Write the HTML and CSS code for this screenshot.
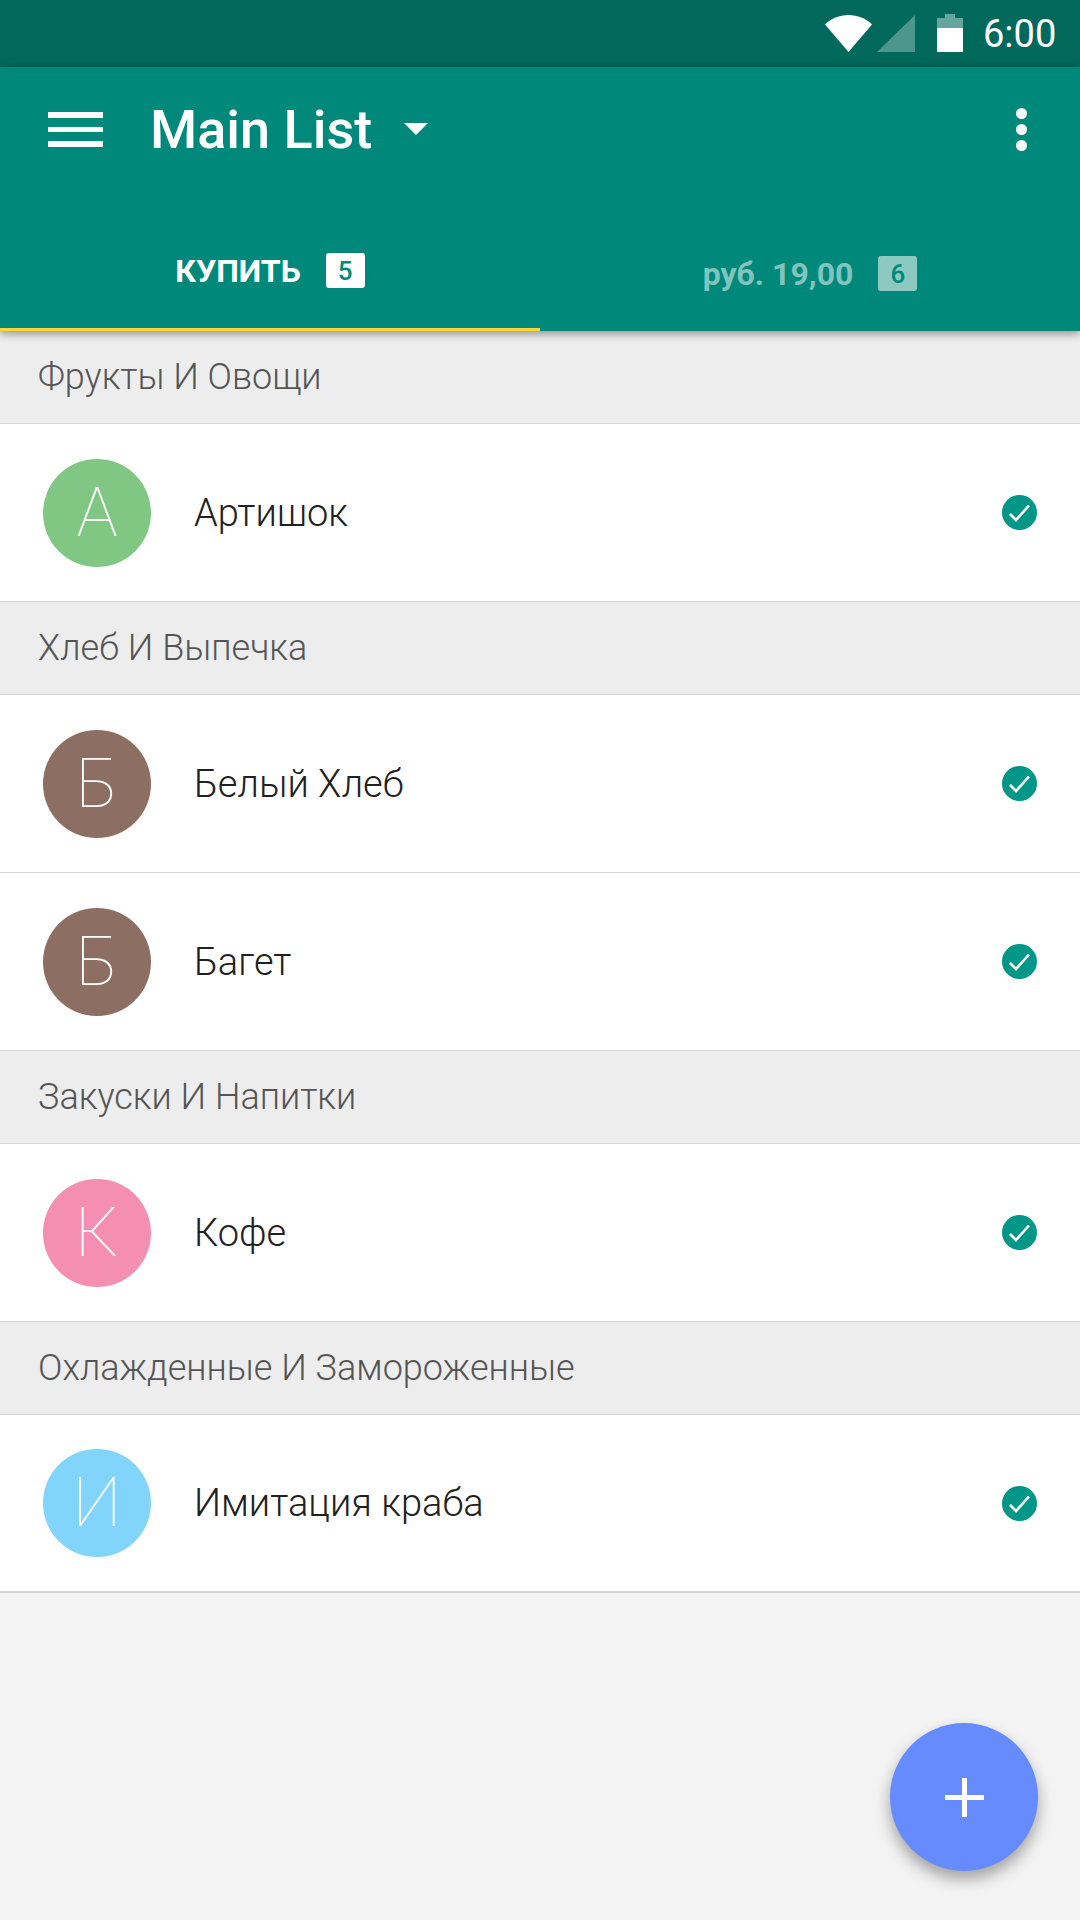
FILE: index.html
```html
<!doctype html>
<html>
<head>
<meta charset="utf-8">
<title>Main List</title>
<meta content="width=1080" name="viewport">
<link rel="stylesheet" href="styles.css">
</head>
<body>

<div class="statusbar">
	<svg class="st-wifi" width="47" height="37" viewBox="0 0 47 37"><path d="M0 9.5C6 3.5 14.5 0 23.5 0S41 3.5 47 9.5L23.5 37z" fill="#fff"/></svg>
	<svg class="st-signal" width="38" height="37" viewBox="0 0 38 37"><path d="M0 37L38 0V37z" fill="#fff" fill-opacity=".3"/></svg>
	<svg class="st-batt" width="26" height="38" viewBox="0 0 26 38"><path d="M8 0H18V4H26V14H0V4H8z" fill="#fff" fill-opacity=".4"/><rect y="14" width="26" height="24" fill="#fff"/></svg>
	<span class="st-time">6:00</span>
</div>

<div class="header">
	<div class="toolbar">
		<svg class="menu" width="55" height="35" viewBox="0 0 55 35"><path d="M0 0H55V6H0zM0 15H55V20H0zM0 29H55V35H0z" fill="#fff"/></svg>
		<span class="title">Main List</span>
		<svg class="arrow" width="24" height="12" viewBox="0 0 24 12"><path d="M0 0H24L12 12z" fill="#fff"/></svg>
		<svg class="more" width="11" height="43" viewBox="0 0 11 43"><circle cx="5.5" cy="5.5" r="5.5" fill="#fff"/><circle cx="5.5" cy="21.5" r="5.5" fill="#fff"/><circle cx="5.5" cy="37.5" r="5.5" fill="#fff"/></svg>
	</div>
	<div class="tabs">
		<div class="tab active"><span class="tab-label">КУПИТЬ</span><span class="badge">5</span></div>
		<div class="tab"><span class="tab-label">руб. 19,00</span><span class="badge">6</span></div>
	</div>
</div>

<div class="list">
	<div class="section">Фрукты И Овощи</div>
	<div class="row">
		<span class="avatar green">А</span>
		<span class="name">Артишок</span>
		<svg class="check" width="35" height="35" viewBox="0 0 35 35"><circle cx="17.5" cy="17.5" r="17.5" fill="#009688"/><path d="M8 19L14 25L27 10.500" fill="none" stroke="#fff" stroke-width="2.600"/></svg>
	</div>
	<div class="section">Хлеб И Выпечка</div>
	<div class="row">
		<span class="avatar brown">Б</span>
		<span class="name">Белый Хлеб</span>
		<svg class="check" width="35" height="35" viewBox="0 0 35 35"><circle cx="17.5" cy="17.5" r="17.5" fill="#009688"/><path d="M8 19L14 25L27 10.500" fill="none" stroke="#fff" stroke-width="2.600"/></svg>
	</div>
	<div class="row">
		<span class="avatar brown">Б</span>
		<span class="name">Багет</span>
		<svg class="check" width="35" height="35" viewBox="0 0 35 35"><circle cx="17.5" cy="17.5" r="17.5" fill="#009688"/><path d="M8 19L14 25L27 10.500" fill="none" stroke="#fff" stroke-width="2.600"/></svg>
	</div>
	<div class="section">Закуски И Напитки</div>
	<div class="row">
		<span class="avatar pink">К</span>
		<span class="name">Кофе</span>
		<svg class="check" width="35" height="35" viewBox="0 0 35 35"><circle cx="17.5" cy="17.5" r="17.5" fill="#009688"/><path d="M8 19L14 25L27 10.500" fill="none" stroke="#fff" stroke-width="2.600"/></svg>
	</div>
	<div class="section">Охлажденные И Замороженные</div>
	<div class="row last">
		<span class="avatar blue">И</span>
		<span class="name">Имитация краба</span>
		<svg class="check" width="35" height="35" viewBox="0 0 35 35"><circle cx="17.5" cy="17.5" r="17.5" fill="#009688"/><path d="M8 19L14 25L27 10.500" fill="none" stroke="#fff" stroke-width="2.600"/></svg>
	</div>
</div>

<div class="fab">
	<svg width="39" height="39" viewBox="0 0 39 39"><path d="M17 0H22V17H39V22H22V39H17V22H0V17H17z" fill="#fff"/></svg>
</div>

</body>
</html>
```

FILE: styles.css
```css
html, body {
	margin: 0;
	padding: 0;
}
body {
	width: 1080px;
	height: 1920px;
	position: relative;
	overflow: hidden;
	background-color: #f4f4f4;
	font-family: Roboto, sans-serif;
}

.statusbar {
	height: 67px;
	background-color: #00695c;
	display: flex;
	align-items: flex-start;
	box-sizing: border-box;
	padding: 15px 23px 0 825px;
	color: #fff;
}
.st-signal { margin-left: 5px; }
.st-batt { margin-left: 22px; margin-top: -1px; }
.st-time {
	margin-left: 20px;
	font-size: 38px;
	line-height: 40px;
	margin-top: -1px;
}

.header {
	height: 264px;
	background-color: #00897b;
	box-shadow: 0 2px 9px rgba(0,0,0,.45);
	position: relative;
	z-index: 2;
}
.toolbar {
	height: 125px;
	display: flex;
	align-items: center;
	padding-left: 48px;
	padding-right: 53px;
	color: #fff;
}
.title {
	margin-left: 47px;
	font-size: 54px;
	font-weight: 500;
	line-height: 64px;
}
.arrow { margin-left: 32px; margin-top: -2px; }
.more { margin-left: auto; }

.tabs {
	display: flex;
	height: 139px;
}
.tab {
	width: 540px;
	box-sizing: border-box;
	display: flex;
	justify-content: center;
	align-items: center;
	padding-top: 24px;
	color: #80c4bd;
	font-size: 32px;
	font-weight: 700;
}
.tab.active {
	color: #fff;
	border-bottom: 3px solid #fdd835;
	padding-top: 21px;
}
.badge {
	width: 39px;
	height: 35px;
	margin-left: 25px;
	border-radius: 3px;
	background-color: #8cc9c1;
	color: #00897b;
	font-size: 26px;
	font-weight: 500;
	line-height: 37px;
	text-align: center;
}
.active .badge { background-color: #fff; }

.section {
	height: 93px;
	box-sizing: border-box;
	padding-left: 38px;
	background-color: #ededed;
	border-bottom: 1px solid #d6d6d6;
	color: #555;
	font-size: 36px;
	font-weight: 300;
	line-height: 92px;
}
.row {
	height: 178px;
	box-sizing: border-box;
	display: flex;
	align-items: center;
	padding-left: 43px;
	padding-right: 43px;
	background-color: #fff;
	border-bottom: 1px solid #d6d6d6;
}
.row.last { border-bottom: 2px solid #d6d6d6; }

.avatar {
	width: 108px;
	height: 108px;
	border-radius: 50%;
	color: #fff;
	font-size: 69px;
	font-weight: 100;
	line-height: 108px;
	text-align: center;
}
.green { background-color: #81c784; }
.brown { background-color: #8d6e63; }
.pink { background-color: #f48fb1; }
.blue { background-color: #81d4fa; }

.name {
	margin-left: 43px;
	color: #212121;
	font-size: 38px;
	font-weight: 300;
}
.check { margin-left: auto; }

.fab {
	position: absolute;
	left: 890px;
	top: 1723px;
	width: 148px;
	height: 148px;
	border-radius: 50%;
	background-color: #668aff;
	box-shadow: 0 8px 16px rgba(0,0,0,.35);
	display: flex;
	align-items: center;
	justify-content: center;
}
```
